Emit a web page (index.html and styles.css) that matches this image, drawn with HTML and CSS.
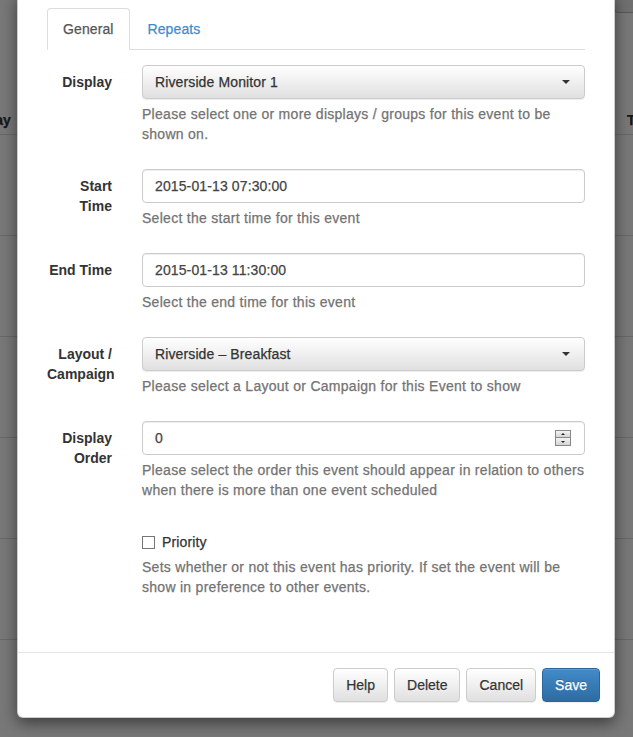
FILE: index.html
```html
<!DOCTYPE html>
<html lang="en">
<head>
<meta charset="utf-8">
<title>Schedule Event</title>
<link rel="stylesheet" href="styles.css">
</head>
<body>
<div class="page">
  <div class="top-btn"></div>
  <div class="table">
    <div class="thead"><span class="th-left">Display</span><span class="th-right">To</span></div>
    <div class="trow"></div>
    <div class="trow"></div>
    <div class="trow"></div>
    <div class="trow"></div>
    <div class="trow"></div>
    <div class="trow"></div>
  </div>
</div>
<div class="backdrop"></div>
<div class="modal">
  <div class="modal-body">
    <ul class="tabs">
      <li class="tab active">General</li>
      <li class="tab link">Repeats</li>
    </ul>
    <div class="form">
      <div class="group">
        <label class="label">Display</label>
        <div class="field">
          <div class="select"><span>Riverside Monitor 1</span><span class="caret"></span></div>
          <p class="help">Please select one or more displays / groups for this event to be shown on.</p>
        </div>
      </div>
      <div class="group">
        <label class="label">Start Time</label>
        <div class="field">
          <div class="input">2015-01-13 07:30:00</div>
          <p class="help">Select the start time for this event</p>
        </div>
      </div>
      <div class="group">
        <label class="label">End Time</label>
        <div class="field">
          <div class="input">2015-01-13 11:30:00</div>
          <p class="help">Select the end time for this event</p>
        </div>
      </div>
      <div class="group">
        <label class="label">Layout / Campaign</label>
        <div class="field">
          <div class="select"><span>Riverside – Breakfast</span><span class="caret"></span></div>
          <p class="help">Please select a Layout or Campaign for this Event to show</p>
        </div>
      </div>
      <div class="group">
        <label class="label">Display Order</label>
        <div class="field">
          <div class="input number"><span>0</span>
            <span class="spin"><span class="spin-btn"><span class="up"></span></span><span class="spin-btn"><span class="down"></span></span></span>
          </div>
          <p class="help">Please select the order this event should appear in relation to others when there is more than one event scheduled</p>
        </div>
      </div>
      <div class="group">
        <div class="label"></div>
        <div class="field check-field">
          <label class="checkbox"><span class="box"></span>Priority</label>
          <p class="help">Sets whether or not this event has priority. If set the event will be show in preference to other events.</p>
        </div>
      </div>
    </div>
  </div>
  <div class="modal-footer">
    <button class="btn">Help</button>
    <button class="btn">Delete</button>
    <button class="btn">Cancel</button>
    <button class="btn primary">Save</button>
  </div>
</div>
</body>
</html>
```
FILE: styles.css
```css
* { box-sizing: border-box; }
html, body { margin: 0; padding: 0; }
body {
  width: 633px;
  height: 737px;
  overflow: hidden;
  position: relative;
  background: #fff;
  font-family: "Liberation Sans", Arial, sans-serif;
  font-size: 14px;
  line-height: 20px;
  color: #333;
  -webkit-text-stroke: 0.25px currentColor;
}
.page { position: relative; height: 737px; }
.top-btn {
  position: absolute;
  right: -10px;
  top: -10px;
  width: 29px;
  height: 23px;
  border: 1px solid #bbb;
  border-radius: 4px;
  background: #eee;
}
.table { padding-top: 100px; }
.thead {
  height: 35px;
  border-bottom: 1px solid #ddd;
  display: flex;
  justify-content: space-between;
  font-weight: bold;
  padding-top: 10px;
}
.th-left { margin-left: -39px; }
.th-right { margin-right: -10px; }
.trow { height: 101px; border-bottom: 1px solid #ddd; }
.backdrop {
  position: absolute;
  inset: 0;
  background: rgba(0, 0, 0, 0.53);
}
.modal {
  position: absolute;
  left: 17px;
  top: -8px;
  width: 598px;
  background: #fff;
  border: 1px solid rgba(0, 0, 0, 0.2);
  border-radius: 6px;
  box-shadow: 0 5px 15px rgba(0, 0, 0, 0.5);
}
.modal-body { padding: 15px 29px 30px 29px; }
.tabs {
  list-style: none;
  margin: 0;
  padding: 0;
  display: flex;
  border-bottom: 1px solid #ddd;
}
.tab {
  margin-bottom: -1px;
  margin-right: 2px;
  padding: 10px 15px;
  border: 1px solid transparent;
  border-radius: 4px 4px 0 0;
  line-height: 20px;
  letter-spacing: 0.1px;
}
.tab.active {
  color: #555;
  background: #fff;
  border-color: #ddd #ddd transparent;
}
.tab.link { color: #428bca; }
.form { padding-top: 15px; }
.group {
  display: grid;
  grid-template-columns: 65px 1fr;
  column-gap: 30px;
  margin-bottom: 15px;
}
.label {
  font-weight: bold;
  text-align: right;
  padding-top: 7px;
  -webkit-text-stroke: 0;
}
.select, .input {
  height: 34px;
  border: 1px solid #ccc;
  border-radius: 4px;
  padding: 6px 12px;
  display: flex;
  align-items: center;
  justify-content: space-between;
  letter-spacing: 0.12px;
}
.select {
  color: #333;
  background: linear-gradient(to bottom, #fff 0%, #e0e0e0 100%);
  box-shadow: inset 0 1px 0 rgba(255,255,255,.15), 0 1px 1px rgba(0,0,0,.075);
}
.input {
  color: #444;
  background: #fff;
  box-shadow: inset 0 1px 1px rgba(0,0,0,.075);
}
.caret {
  width: 0;
  height: 0;
  border-top: 4px solid #333;
  border-left: 4px solid transparent;
  border-right: 4px solid transparent;
  margin-right: 2px;
}
.spin {
  display: flex;
  flex-direction: column;
  width: 16px;
  margin-right: 1px;
}
.spin-btn {
  height: 8px;
  border: 1px solid #888;
  background: linear-gradient(#f4f4f4, #d4d4d4);
  display: flex;
  align-items: center;
  justify-content: center;
}
.spin-btn + .spin-btn { border-top: none; }
.up, .down { width: 0; height: 0; border-left: 2px solid transparent; border-right: 2px solid transparent; }
.up { border-bottom: 2px solid #222; }
.down { border-top: 2px solid #222; }
.help {
  margin: 5px 0 10px;
  color: #737373;
  letter-spacing: 0.28px;
}
.check-field { padding-top: 7px; }
.checkbox {
  display: flex;
  align-items: center;
  height: 20px;
  color: #333;
  letter-spacing: 0.15px;
}
.box {
  width: 13px;
  height: 13px;
  border: 1px solid #767676;
  background: #fff;
  margin-right: 7px;
  margin-top: 1px;
}
.modal-footer {
  border-top: 1px solid #e5e5e5;
  padding: 15px 14px 15px 15px;
  display: flex;
  justify-content: flex-end;
  gap: 6px;
}
.btn {
  font-family: inherit;
  font-size: 14px;
  line-height: 20px;
  height: 34px;
  padding: 6px 12px;
  border: 1px solid #ccc;
  border-radius: 4px;
  color: #333;
  -webkit-text-stroke: 0.25px currentColor;
  text-shadow: 0 1px 0 #fff;
  background: linear-gradient(to bottom, #fff 0%, #e0e0e0 100%);
  box-shadow: inset 0 1px 0 rgba(255,255,255,.15), 0 1px 1px rgba(0,0,0,.075);
}
.btn.primary {
  color: #fff;
  text-shadow: 0 -1px 0 rgba(0,0,0,.2);
  border-color: #2b669a;
  background: linear-gradient(to bottom, #428bca 0%, #2d6ca2 100%);
}
```
